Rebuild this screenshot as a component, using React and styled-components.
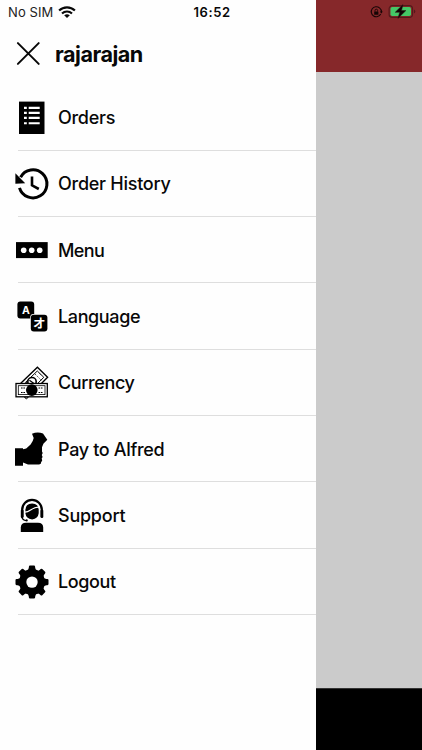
import React from "react";
import styled, { createGlobalStyle } from "styled-components";

const GlobalStyle = createGlobalStyle`
  * { box-sizing: border-box; }
  body { margin: 0; background: #fff; }
`;

const Screen = styled.div`
  position: relative;
  display: flex;
  width: 422px;
  height: 750px;
  overflow: hidden;
  background: #fff;
  color: #080808;
  font-family: Inter, "Liberation Sans", sans-serif;
`;

const Drawer = styled.aside`
  width: 316px;
  height: 100%;
  background: #fefefe;
`;

const Backdrop = styled.main`
  flex: 1;
  display: flex;
  flex-direction: column;
`;

const BackdropHeader = styled.div`
  height: 72px;
  background: #86282a;
`;

const BackdropBody = styled.div`
  flex: 1;
  background: #cbcbcb;
`;

const BackdropFooter = styled.div`
  height: 62px;
  background: #000;
  border-top: 1px solid #333;
`;

const StatusBar = styled.div`
  position: absolute;
  inset: 0 0 auto 0;
  height: 24px;
  display: grid;
  grid-template-columns: 1fr auto 1fr;
  align-items: center;
  padding: 0 6px 0 8px;
`;

const StatusGroup = styled.div`
  display: flex;
  align-items: center;
  justify-content: ${(p) => (p.$end ? "flex-end" : "flex-start")};
  gap: ${(p) => (p.$end ? 6 : 5)}px;
`;

const Carrier = styled.span`
  font-size: 13px;
  line-height: 24px;
  letter-spacing: 0.1px;
  color: #222;
`;

const Clock = styled.span`
  font-size: 13px;
  line-height: 24px;
  font-weight: 600;
  letter-spacing: 0.6px;
`;

const DrawerHeader = styled.header`
  display: flex;
  align-items: center;
  height: 60.5px;
  margin-top: 24px;
  padding-left: 16px;
  gap: 14px;
`;

const CloseButton = styled.button`
  display: flex;
  padding: 0;
  border: 0;
  background: none;
  color: inherit;
`;

const UserName = styled.h1`
  margin: -1px 0 0;
  font-size: 21.6px;
  line-height: 28px;
  font-weight: 700;
  letter-spacing: -0.5px;
`;

const MenuList = styled.ul`
  margin: 0;
  padding: 0;
  list-style: none;
`;

const MenuItem = styled.li`
  display: flex;
  align-items: center;
  gap: 9px;
  height: 66.3px;
  padding-left: 15px;
  background: linear-gradient(#dedede, #dedede) 18px 100% / 298px 1px no-repeat;
`;

const Label = styled.span`
  margin-top: 1px;
  font-size: 18px;
  line-height: 24px;
  font-weight: 500;
  letter-spacing: ${(p) => p.$tracking}px;
`;

const IconSvg = styled.svg`
  display: block;
  flex: none;
  overflow: visible;
`;

const Glyph = styled.text`
  font-family: ${(p) => (p.$cjk ? '"Noto Sans CJK JP", sans-serif' : "Inter, sans-serif")};
  font-size: ${(p) => p.$size}px;
  font-weight: 700;
  fill: #fff;
  text-anchor: middle;
`;

const Icon = ({ children }) => (
  <IconSvg width="34" height="34" viewBox="0 0 34 34" fill="#000" aria-hidden="true">
    {children}
  </IconSvg>
);

const OrdersIcon = () => (
  <Icon>
    <path d="M4 .6h25.5V33H4z" />
    {[6.9, 11.9, 16.9, 22.2].map((y) => (
      <g key={y} stroke="#fff" strokeWidth="2.1">
        <path d={`M9 ${y}h2.8M13.7 ${y}h11`} />
      </g>
    ))}
  </Icon>
);

const HistoryIcon = () => (
  <Icon>
    <path d="M4.5 20.8A14 14 0 1 0 5.6 10.2" fill="none" stroke="#000" strokeWidth="3" />
    <path d="M.4 6.2 10.2 16.3.4 16.7z" />
    <path d="M17 9.5v8.8l6.8 3.7" fill="none" stroke="#000" strokeWidth="2.6" />
  </Icon>
);

const MoreIcon = () => (
  <Icon>
    <path d="M1 9.1h31.7v16H1z" />
    <g fill="#fff">
      <circle cx="8.7" cy="17.2" r="2.8" />
      <circle cx="16.7" cy="17.2" r="2.8" />
      <circle cx="24.7" cy="17.2" r="2.8" />
    </g>
  </Icon>
);

const LanguageIcon = () => (
  <Icon>
    <rect x="2.4" y="1.6" width="16.8" height="17" rx="3" />
    <rect x="15.2" y="14.1" width="17.8" height="17.9" rx="3.4" fill="#fff" />
    <rect x="15.8" y="14.7" width="16.6" height="16.7" rx="3" />
    <Glyph $size={10.5} x="10.9" y="13.6">A</Glyph>
    <Glyph $size={12.5} $cjk x="24.2" y="27.6">オ</Glyph>
  </Icon>
);

const CurrencyIcon = () => (
  <Icon>
    <g fill="#fff" stroke="#000">
      <path d="M6.3 16.8 22.4 1.2l10.2 10.1-15.8 16z" strokeWidth="1.4" />
      <path d="M10.5 16.4 22.3 5l6.5 6.3-8 8z" strokeWidth="1" />
      <path d="m20 8 6.5 6.4M24.5 7.5l1.8 1.8" strokeWidth=".7" strokeDasharray="1.5 1" />
      <circle cx="17" cy="15.7" r="4.2" strokeWidth="1.6" />
      <path d="m14.4 14.2 5 3.6" strokeWidth="1.2" />
      <path d="m9.5 31 1.8 2 2.2-2z" strokeWidth="1" />
      <rect x="1" y="17.5" width="31.3" height="13.3" strokeWidth="1.3" />
      <rect x="3.3" y="19.7" width="26.7" height="8.9" strokeWidth=".8" />
      <path d="M6 22h4M6 26.5h4M23.5 22h4M23.5 26.5h4" strokeWidth="1" strokeDasharray="1.6 .8" />
    </g>
    <circle cx="16.8" cy="24.1" r="5.8" />
  </Icon>
);

const PayIcon = () => (
  <Icon>
    <path d="M0 16.2h8v1l3.2-.7 4.4-4.1 2.1-3.5 1-3L17 1.8Q22.6-.7 28 1.6L32.3 7.8 28.4 11.8 27 15.2v4.2l.7 1.7-.9 1.8.8 2-.9 1.7.5 2-1.2 1.8-.2 1.4-1.7.8H13L8 30.6v3.2H0z" />
  </Icon>
);

const SupportIcon = () => (
  <Icon>
    <path d="M7.2 19v-7.3a9.8 9.8 0 0 1 19.6 0V19" fill="none" stroke="#000" strokeWidth="2.2" />
    <rect x="5.8" y="11.5" width="2.8" height="8.5" rx="1.2" />
    <rect x="25.5" y="11.5" width="2.8" height="8.5" rx="1.2" />
    <path d="M10.4 12q0-6.3 6.7-6.6 6.6.3 6.6 6.6v3.2q-.7 5.4-6.6 6.4-6.1-1-6.7-6.4z" />
    <path d="M10 14.2c5-.1 8-5.8 14-5.1" fill="none" stroke="#fff" strokeWidth="1.2" />
    <path d="M7 19q.5 3.2 4.2 3.6" fill="none" stroke="#000" strokeWidth="1.4" />
    <circle cx="11.7" cy="22.4" r="1.1" />
    <path d="M5.8 33.9v-4.3q0-4.9 5.2-4.9h12q5.2 0 5.2 4.9v4.3z" />
  </Icon>
);

const GearIcon = () => (
  <Icon>
    <circle cx="17" cy="17.1" r="13" />
    {[0, 45, 90, 135, 180, 225, 270, 315].map((a) => (
      <path
        key={a}
        transform={`rotate(${a} 17 17.1)`}
        d="M11.4 6.5q2.2-1.1 2.4-3.8l.1-1q.1-1.1 1.1-1.1h4q1 0 1.1 1.1l.1 1q.2 2.7 2.4 3.8z"
      />
    ))}
    <circle cx="17" cy="17.1" r="5.7" fill="#fff" />
  </Icon>
);

const WifiIcon = () => (
  <IconSvg width="18" height="13" viewBox="0 0 18 13" aria-hidden="true">
    <g fill="none" stroke="#080808" strokeWidth="2.1">
      <path d="M1.1 4.6a11.2 11.2 0 0 1 15.8 0M4 7.5a7.1 7.1 0 0 1 10 0" />
    </g>
    <path d="M9 12.1 6.2 9.3q2.8-2.2 5.6 0z" fill="#080808" />
  </IconSvg>
);

const RotationLockIcon = () => (
  <IconSvg width="13" height="12" viewBox="0 0 13 12" aria-hidden="true">
    <path d="M9.5 1.9A5 5 0 1 0 10.7 8M9.5 1.9A5 5 0 0 1 11.4 6" fill="none" stroke="#160505" strokeWidth="1.1" />
    <path d="M9.8 5.5h3L11.3 7.5z" fill="#160505" />
    <rect x="4.2" y="5.4" width="4.2" height="3.4" rx=".5" fill="#160505" />
    <path d="M5 5.6V4.5a1.3 1.3 0 0 1 2.6 0v1.1" fill="none" stroke="#160505" strokeWidth=".9" />
  </IconSvg>
);

const BatteryIcon = () => (
  <IconSvg width="27" height="14" viewBox="0 0 27 14" aria-hidden="true">
    <rect x=".1" y=".6" width="23.4" height="11.8" rx="3.2" fill="none" stroke="#54191b" strokeWidth="1.1" />
    <rect x="1.5" y="2.1" width="20.5" height="8.8" rx="1.7" fill="#45c766" />
    <path d="M24.9 4.4q1.4.4 1.4 2.1t-1.4 2.1z" fill="#54191b" />
    <path d="M14-.4 6.2 7.3h4.5L8.9 13.4l8-7.8h-4.4z" fill="#0c0505" stroke="#301112" strokeWidth=".5" />
  </IconSvg>
);

const items = [
  { label: "Orders", icon: OrdersIcon, tracking: -0.28 },
  { label: "Order History", icon: HistoryIcon, tracking: -0.26 },
  { label: "Menu", icon: MoreIcon, tracking: -0.6 },
  { label: "Language", icon: LanguageIcon, tracking: -0.38 },
  { label: "Currency", icon: CurrencyIcon, tracking: -0.38 },
  { label: "Pay to Alfred", icon: PayIcon, tracking: -0.34 },
  { label: "Support", icon: SupportIcon, tracking: -0.24 },
  { label: "Logout", icon: GearIcon, tracking: -0.38 },
];

export default function App() {
  return (
    <>
      <GlobalStyle />
      <Screen>
        <Drawer>
          <DrawerHeader>
            <CloseButton aria-label="Close">
              <IconSvg width="25" height="24" viewBox="0 0 25 24">
                <path d="m1.9 1.1 20.8 20.8m0-20.8L1.9 21.9" stroke="#080808" strokeWidth="2" strokeLinecap="round" />
              </IconSvg>
            </CloseButton>
            <UserName>rajarajan</UserName>
          </DrawerHeader>
          <MenuList>
            {items.map(({ label, icon: ItemIcon, tracking }) => (
              <MenuItem key={label}>
                <ItemIcon />
                <Label $tracking={tracking}>{label}</Label>
              </MenuItem>
            ))}
          </MenuList>
        </Drawer>
        <Backdrop>
          <BackdropHeader />
          <BackdropBody />
          <BackdropFooter />
        </Backdrop>
        <StatusBar>
          <StatusGroup>
            <Carrier>No SIM</Carrier>
            <WifiIcon />
          </StatusGroup>
          <Clock>16:52</Clock>
          <StatusGroup $end>
            <RotationLockIcon />
            <BatteryIcon />
          </StatusGroup>
        </StatusBar>
      </Screen>
    </>
  );
}
